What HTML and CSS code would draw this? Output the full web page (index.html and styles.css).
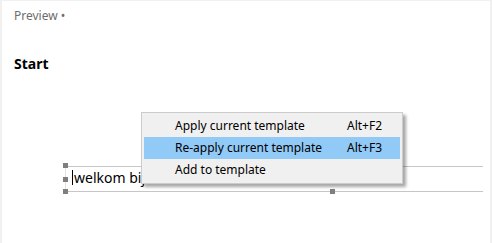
FILE: index.html
```html
<!DOCTYPE html>
<html lang="nl">
<head>
    <meta charset="UTF-8">
    <meta name="viewport" content="width=device-width, initial-scale=1.0">
    <title>Preview</title>
    <link rel="stylesheet" href="styles.css">
</head>
<body>
    <div class="page">
        <div class="preview-label">Preview &bull;</div>
        <h3 class="title">Start</h3>

        <div class="field">
            <span class="handle handle-tl"></span>
            <span class="handle handle-ml"></span>
            <span class="handle handle-bl"></span>
            <span class="handle handle-bc"></span>
            <div class="field-text"><span class="caret"></span>welkom bij het</div>
        </div>

        <ul class="menu">
            <li class="menu-item"><span>Apply current template</span><span class="shortcut">Alt+F2</span></li>
            <li class="menu-item active"><span>Re-apply current template</span><span class="shortcut">Alt+F3</span></li>
            <li class="menu-item"><span>Add to template</span><span class="shortcut"></span></li>
        </ul>
    </div>
</body>
</html>
```

FILE: styles.css
```css
html, body {
    margin: 0;
    height: 100%;
    background: #ffffff;
}
body {
    font-family: "Noto Sans", "Open Sans", sans-serif;
}
.page {
    position: relative;
    box-sizing: border-box;
    height: 243px;
    width: 492px;
    border-left: 2px solid #f0f0f0;
    border-top: 1px solid #f0f0f0;
    border-right: 2px solid #f0f0f0;
    padding: 6px 0 0 12px;
    overflow: hidden;
}
.preview-label {
    font-size: 12px;
    color: #6d6d6d;
    line-height: 18px;
}
.title {
    margin: 29px 0 0 0;
    font-size: 14px;
    font-weight: bold;
    color: #000;
    line-height: 20px;
}
.field {
    position: relative;
    margin: 92px 0 0 51px;
    width: 417px;
    height: 24px;
    border-top: 1px solid #c6c6c6;
    border-bottom: 1px solid #c6c6c6;
    border-left: 1px solid #e2e2e2;
}
.field-text {
    box-sizing: border-box;
    display: flex;
    align-items: center;
    height: 24px;
    padding: 0 0 3px 6px;
    font-size: 14px;
    color: #000;
}
.caret {
    display: inline-block;
    width: 1px;
    height: 15px;
    background: #000;
    margin-right: 1px;
}
.handle {
    position: absolute;
    width: 5px;
    height: 5px;
    background: #7f7f7f;
}
.handle-tl { left: -3px; top: -4px; }
.handle-ml { left: -3px; top: 10px; }
.handle-bl { left: -3px; top: 22px; }
.handle-bc { left: 264px; top: 22px; }
.menu {
    position: absolute;
    left: 139px;
    top: 111px;
    width: 256px;
    margin: 0;
    padding: 2px;
    list-style: none;
    background: #f0f0f0;
    border: 1px solid #cccccc;
    box-shadow: 3px 3px 3px rgba(0, 0, 0, 0.35);
    font-size: 12px;
    color: #000;
}
.menu-item {
    display: flex;
    justify-content: space-between;
    height: 22px;
    line-height: 22px;
    padding: 0 0 0 31px;
}
.menu-item.active {
    background: #91c9f7;
}
.shortcut {
    width: 53px;
}
```
